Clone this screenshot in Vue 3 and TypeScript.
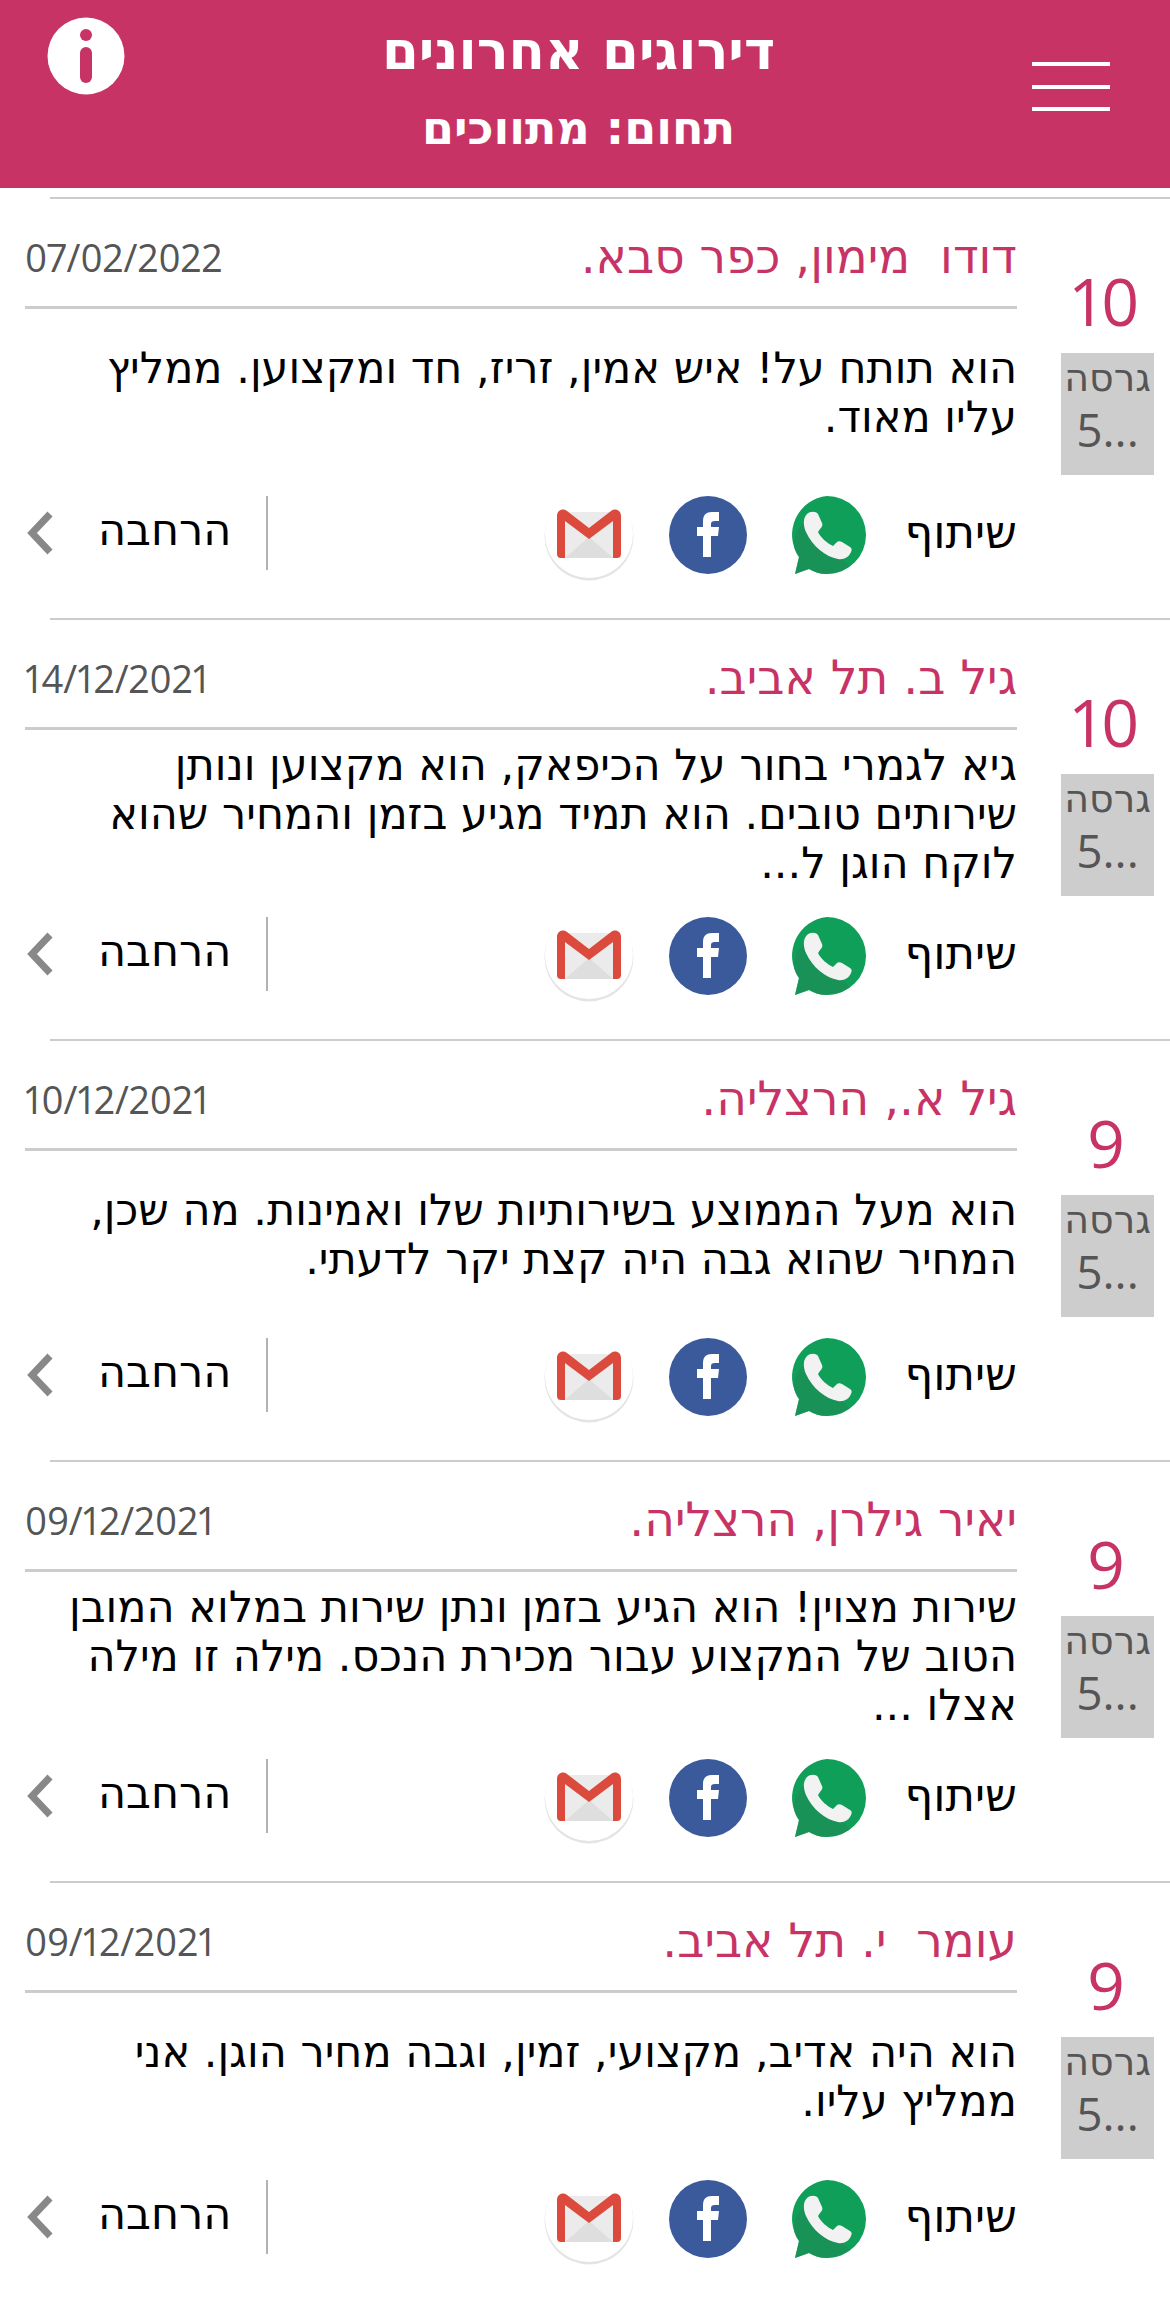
<script setup lang="ts">
interface Review {
  name: string;
  date: string;
  score: number;
  text: string;
}

const reviews: Review[] = [
  {
    name: "דודו  מימון, כפר סבא.",
    date: "07/02/2022",
    score: 10,
    text: "הוא תותח על! איש אמין, זריז, חד ומקצוען. ממליץ עליו מאוד.",
  },
  {
    name: "גיל ב. תל אביב.",
    date: "14/12/2021",
    score: 10,
    text: "גיא לגמרי בחור על הכיפאק, הוא מקצוען ונותן שירותים טובים. הוא תמיד מגיע בזמן והמחיר שהוא לוקח הוגן ל...",
  },
  {
    name: "גיל א., הרצליה.",
    date: "10/12/2021",
    score: 9,
    text: "הוא מעל הממוצע בשירותיות שלו ואמינות. מה שכן, המחיר שהוא גבה היה קצת יקר לדעתי.",
  },
  {
    name: "יאיר גילרן, הרצליה.",
    date: "09/12/2021",
    score: 9,
    text: "שירות מצוין! הוא הגיע בזמן ונתן שירות במלוא המובן הטוב של המקצוע עבור מכירת הנכס. מילה זו מילה אצלו ...",
  },
  {
    name: "עומר  י. תל אביב.",
    date: "09/12/2021",
    score: 9,
    text: "הוא היה אדיב, מקצועי, זמין, וגבה מחיר הוגן. אני ממליץ עליו.",
  },
];
</script>

<template>
  <main class="page" dir="rtl">
    <header class="topbar">
      <div class="menu-icon"><span></span><span></span><span></span></div>
      <div class="titles">
        <h1>דירוגים אחרונים</h1>
        <h2>תחום: מתווכים</h2>
      </div>
      <svg class="info-icon" viewBox="0 0 78 78">
        <circle cx="39" cy="39" r="38.500" fill="#fff" />
        <circle cx="39" cy="18" r="6" fill="#c83366" />
        <rect x="33" y="30" width="12" height="36" rx="6" fill="#c83366" />
      </svg>
    </header>

    <section v-for="(r, i) in reviews" :key="i" class="review">
      <div class="score-col">
        <div class="score">{{ r.score }}</div>
        <div class="version">
          <span>גרסה</span>
          <span class="version-num" dir="ltr">5...</span>
        </div>
      </div>
      <div class="content">
        <div class="head">
          <span class="name">{{ r.name }}</span>
          <span class="date">{{ r.date }}</span>
        </div>
        <div class="body">
          <p>{{ r.text }}</p>
        </div>
        <div class="actions">
          <span class="share-label">שיתוף</span>
          <svg class="ico" viewBox="0 0 78 78">
            <path d="M39 0a38.500 38.500 0 0 1 0 78c-7 0-13-2-18-5L7 78l4-17A39 39 0 0 1 39 0z" fill="#0f9f59" />
            <path d="M17 26 62 70C56 75 48 78 39 78c-7 0-13-2-18-5L7 78l4-17C2 50 6 35 17 26z" fill="#1f8a57" opacity=".6" />
            <path d="M19 18c3-3 9-3 11 0l4 9c1 2 0 4-2 6l-2 3c3 6 9 11 15 14l4-4c1-1 3-1 5 0l8 5c2 1 2 3 1 5-2 5-7 8-13 7-12-2-26-13-32-27-3-7-3-14 1-18z" fill="#f2f2f2" />
          </svg>
          <svg class="ico fb" viewBox="0 0 78 78">
            <circle cx="39" cy="39" r="39" fill="#3b5a9c" />
            <path d="M34 61V40h-6v-9h6v-6c0-6 3-9 9-9h7v9h-4c-3 0-4 1-4 3v3h8l-1 9h-7v21z" fill="#fff" />
          </svg>
          <svg class="ico gmail" viewBox="0 0 92 92">
            <circle cx="46" cy="47" r="44.500" fill="#e4e4e4" />
            <circle cx="46" cy="45" r="44" fill="#fff" />
            <path d="M15 23h61v46H15z" fill="#ebebeb" />
            <path d="M22 69 46 48 70 69z" fill="#dedede" />
            <path d="M14 27c0-6 6-8 10-5l22 17 22-17c4-3 10-1 10 5v38c0 3-2 4-4 4h-4V32L46 50 22 32v37h-4c-2 0-4-1-4-4z" fill="#db4a3c" />
          </svg>
          <div class="more">
            <span class="more-label">הרחבה</span>
            <svg class="chevron" viewBox="0 0 26 44">
              <path d="M23 3 5 22l18 19" fill="none" stroke="#888" stroke-width="7" />
            </svg>
          </div>
        </div>
      </div>
    </section>
  </main>
</template>

<style>
html,
body {
  background: #fff;
}
</style>

<style scoped>
.page {
  width: 1170px;
  font-family: "DejaVu Sans", "Liberation Sans", sans-serif;
  color: #000;
}

.topbar {
  height: 188px;
  background: #c83366;
  color: #fff;
  display: flex;
  justify-content: space-between;
  align-items: flex-start;
  padding: 17px 60px 0 47px;
  box-sizing: border-box;
  margin-bottom: 9px;
}

.menu-icon {
  display: flex;
  flex-direction: column;
  gap: 18.5px;
  width: 78px;
  margin-top: 45px;
}

.menu-icon span {
  display: block;
  height: 4px;
  background: #fff;
}

.titles {
  text-align: center;
  flex: 1;
}

.titles h1 {
  margin: 0;
  font-size: 53px;
  line-height: 68px;
  font-weight: 700;
}

.titles h2 {
  margin: 13px 0 0;
  font-size: 46px;
  line-height: 60px;
  font-weight: 700;
}

.info-icon {
  width: 78px;
  height: 78px;
}

.review {
  margin-left: 50px;
  border-top: 2px solid #ccc;
  height: 421px;
  box-sizing: border-box;
  display: flex;
}

.score-col {
  width: 96px;
  margin-right: 16px;
  padding-top: 48px;
  text-align: center;
}

.score {
  font-family: "Open Sans", sans-serif;
  font-variant-numeric: proportional-nums;
  font-size: 66px;
  line-height: 106px;
  color: #c83366;
}

.version {
  background: #cdcdcd;
  color: #555;
  height: 122px;
  width: 93px;
  display: flex;
  flex-direction: column;
  align-items: center;
  font-size: 38px;
  line-height: 50px;
}

.version-num {
  font-family: "Open Sans", sans-serif;
  font-size: 46px;
  line-height: 52px;
}

.content {
  width: 992px;
  margin-right: 41px;
  margin-left: -25px;
  padding-top: 28px;
}

.head {
  display: flex;
  justify-content: space-between;
  align-items: flex-start;
  height: 82px;
  border-bottom: 3px solid #ccc;
  box-sizing: border-box;
}

.name {
  color: #c83366;
  font-size: 47px;
  line-height: 60px;
  white-space: pre;
}

.date {
  font-family: "Open Sans", sans-serif;
  font-variant-numeric: proportional-nums;
  color: #555;
  font-size: 38px;
  margin-top: 4px;
}

.body {
  height: 168px;
  display: flex;
  align-items: center;
}

.body p {
  margin: 0;
  font-size: 43px;
  line-height: 49px;
}

.actions {
  display: flex;
  align-items: center;
  height: 116px;
}

.share-label {
  font-size: 45px;
  width: 116px;
  margin-top: -6px;
}

.ico {
  width: 78px;
  height: 78px;
  margin-right: 35px;
}

.fb {
  margin-right: 41px;
}

.gmail {
  width: 92px;
  height: 92px;
  margin-right: 34px;
}

.more {
  margin-right: auto;
  display: flex;
  align-items: center;
  border-right: 2px solid #b3b3b3;
  height: 74px;
  margin-top: -4px;
}

.more-label {
  font-size: 43px;
  margin-right: 35px;
  margin-top: -6px;
}

.chevron {
  width: 26px;
  height: 44px;
  margin-right: 45px;
  margin-left: 2px;
}
</style>
